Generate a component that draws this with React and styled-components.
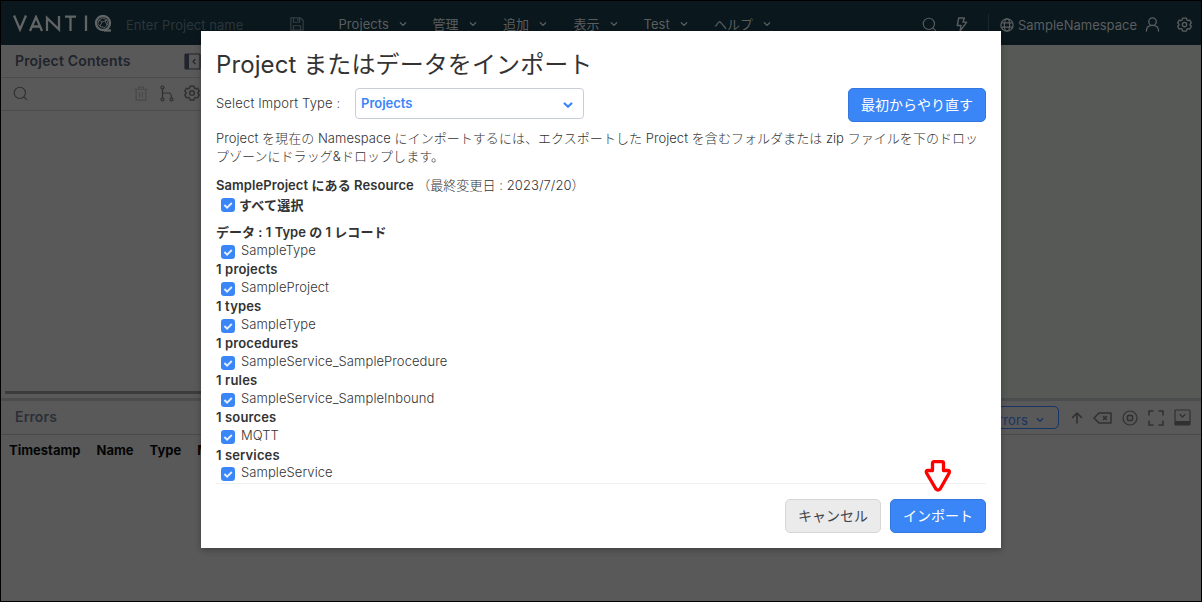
import React from "react";
import styled, { createGlobalStyle, css } from "styled-components";

const Global = createGlobalStyle`
  * { box-sizing: border-box; }
  body { margin: 0; background: #000; }
  body, button { font-family: Inter, "Noto Sans CJK JP", sans-serif; }
`;

const Screen = styled.div`
  position: relative;
  width: 1202px;
  height: 602px;
  border: 1px solid #000;
  background: #595959;
  overflow: hidden;
  display: flex;
  flex-direction: column;
`;

const Header = styled.header`
  height: 44px;
  flex: none;
  background: #0a171c;
  color: #5a5e60;
  display: flex;
  align-items: center;
  padding: 0 9px 0 12px;
  font-size: 13px;
`;

const ProjectName = styled.span`
  margin: 3px 0 0 14px;
  width: 164px;
  color: #2a363b;
  font-size: 13px;
  letter-spacing: 0.05px;
`;

const SaveIcon = styled.span`
  display: flex;
  margin-top: 2px;
  color: #353f43;
`;

const Menus = styled.nav`
  display: flex;
  margin: 1px 0 0 34.500px;
`;

const MenuItem = styled.span`
  width: ${(p) => p.$w}px;
  display: flex;
  align-items: center;
  gap: 10px;
  height: 20px;
  white-space: nowrap;
  letter-spacing: ${(p) => p.$ls || 0}px;
`;

const HeaderTools = styled.div`
  margin-left: auto;
  display: flex;
  align-items: center;
  svg { flex: none; margin-top: 3px; }
  .bolt { margin-left: 17px; }
  .user { margin-right: 17px; }
`;

const Divider = styled.i`
  width: 1px;
  height: 18px;
  margin: 0 11px 0 19px;
  background: #1b272c;
`;

const Namespace = styled.span`
  margin: 4px 8px 0 4px;
  font-size: 13px;
`;

const Workspace = styled.div`
  flex: none;
  height: 353px;
  display: flex;
`;

const SidePanel = styled.aside`
  width: 206px;
  display: flex;
  flex-direction: column;
  background: #595959;
`;

const PanelTitle = styled.div`
  height: 33px;
  border-bottom: 1px solid #4b4c4d;
  padding: 0 6px 0 14px;
  display: flex;
  align-items: center;
  justify-content: space-between;
  font-size: 14px;
  font-weight: 600;
  letter-spacing: 0.17px;
  color: #20242c;
  span { padding-bottom: 2px; }
`;

const PanelTools = styled.div`
  height: 33px;
  border-bottom: 1px solid #4b4c4d;
  padding: 0 7px 2px 12px;
  display: flex;
  align-items: center;
  color: #2f3032;
  .trash { margin-left: auto; color: #484848; }
  .tree { margin: 0 10px 0 12px; }
`;

const Scrollbar = styled.div`
  height: 3px;
  margin: auto 0 4px 4px;
  background: #3c3c3d;
`;

const Canvas = styled.main`
  flex: 1;
  background: #575957;
`;

const Splitter = styled.div`
  height: 3px;
  flex: none;
  background: #4a4c4e;
`;

const ErrorsBar = styled.div`
  height: 34px;
  flex: none;
  border-bottom: 1px solid #4a4a4a;
  padding: 0 10px 0 14px;
  display: flex;
  align-items: center;
  font-size: 14px;
  font-weight: 600;
  letter-spacing: 0.15px;
  color: #2b2f37;
  > span { padding-bottom: 2px; }
`;

const BarTools = styled.div`
  margin-left: auto;
  display: flex;
  align-items: center;
  gap: 10px;
  color: #303030;
`;

const Filter = styled.span`
  width: 90px;
  height: 23px;
  margin-right: 2px;
  border: 1px solid #173464;
  border-radius: 5px;
  padding: 4px 14px 0 0;
  display: flex;
  align-items: center;
  justify-content: flex-end;
  gap: 8px;
  color: #173464;
  font-size: 13px;
  font-weight: 400;
  white-space: nowrap;
`;

const TableHead = styled.div`
  height: 30px;
  flex: none;
  padding: 0 8px;
  display: flex;
  align-items: center;
  gap: 16px;
  font-size: 13px;
  font-weight: 700;
  color: #050505;
  white-space: nowrap;
`;

const Dialog = styled.section`
  position: absolute;
  left: 200px;
  top: 30px;
  width: 800px;
  height: 517px;
  padding: 18px 15px 15px;
  background: #fff;
  color: #333;
  box-shadow: 0 2px 6px rgba(0, 0, 0, 0.3);
  display: flex;
  flex-direction: column;
  font-size: 13px;
`;

const Title = styled.h1`
  margin: 0;
  height: 32px;
  line-height: 32px;
  font-size: 24px;
  font-weight: 400;
  letter-spacing: 0.1px;
  white-space: nowrap;
`;

const ImportRow = styled.div`
  display: flex;
  align-items: center;
  height: 34px;
  margin-top: 7px;
`;

const FieldLabel = styled.span`
  width: 139px;
  padding-bottom: 4px;
  letter-spacing: 0.16px;
  font-weight: 300;
`;

const Select = styled.div`
  width: 229px;
  height: 31px;
  margin-bottom: 3px;
  border: 1px solid #c9cdd8;
  border-radius: 4px;
  padding: 0 10px 0 5px;
  display: flex;
  align-items: center;
  justify-content: space-between;
  color: #3a86f7;
  font-weight: 600;
  span { padding-bottom: 2px; }
  svg { margin-top: 2px; }
`;

const Button = styled.button`
  width: ${(p) => p.$w}px;
  height: 34px;
  padding: 0 0 2px;
  border-radius: 5px;
  font-size: 14px;
  white-space: nowrap;
  ${(p) =>
    p.$primary
      ? css`
          background: #3a86f7;
          border: 1px solid #3478df;
          color: #fff;
        `
      : css`
          background: #ebebeb;
          border: 1px solid #d6d6d6;
          color: #40444c;
        `}
`;

const Restart = styled(Button)`
  margin-left: auto;
`;

const Description = styled.p`
  margin: 7px 0 0;
  height: 36px;
  line-height: 18px;
  font-weight: 300;
  letter-spacing: 0.045px;
  white-space: nowrap;
`;

const Heading = styled.div`
  height: ${(p) => p.$h || 18.55}px;
  line-height: 18px;
  margin-top: ${(p) => p.$mt || 0}px;
  font-weight: 600;
  letter-spacing: ${(p) => p.$ls || 0}px;
  white-space: nowrap;
`;

const Modified = styled.span`
  font-weight: 300;
`;

const CheckRow = styled.label`
  height: ${(p) => p.$h || 18.55}px;
  line-height: ${(p) => (p.$bold ? 18 : 17.4)}px;
  display: flex;
  align-items: flex-start;
  gap: ${(p) => (p.$bold ? 4 : 6)}px;
  padding-left: 5px;
  margin-bottom: ${(p) => (p.$bold ? 8 : 0)}px;
  font-weight: ${(p) => (p.$bold ? 600 : 300)};
  letter-spacing: ${(p) => (p.$bold ? 0.25 : 0.07)}px;
  svg { flex: none; margin-top: ${(p) => (p.$bold ? 2 : 3.3)}px; }
`;

const Footer = styled.footer`
  margin-top: auto;
  height: 50px;
  border-top: 1px solid #f0f0f0;
  display: flex;
  align-items: flex-end;
  justify-content: flex-end;
  gap: 9px;
`;

const Pointer = styled.svg`
  position: absolute;
  left: 722px;
  top: 428px;
`;

const Icon = ({ size = 16, w, h, box = "0 0 16 16", sw = 1.2, children, className }) => (
  <svg className={className} width={w || size} height={h || size} viewBox={box} fill="none" stroke="currentColor"
    strokeWidth={sw} strokeLinecap="round" strokeLinejoin="round">{children}</svg>
);

const Chevron = ({ size = 8, sw = 1.3 }) => (
  <Icon size={size} box="0 0 8 8" sw={sw}><path d="M1.3 2.8 4 5.4 6.7 2.8" /></Icon>
);

const Gear = ({ size = 16 }) => (
  <Icon size={size} sw={1.4}>
    <path d="M6 1.2h4l.6 2 1 .6 2-.5 1.7 3-1.4 1.4v.8l1.4 1.4-1.7 3-2-.5-1 .6-.6 2H6l-.6-2-1-.6-2 .5-1.7-3 1.4-1.4v-.8L.7 6.3l1.7-3 2 .5 1-.6z" />
    <circle cx="8" cy="8.1" r="2.3" />
  </Icon>
);

const Search = ({ size = 15 }) => (
  <Icon size={size}><circle cx="7.3" cy="7.3" r="6" /><path d="m11.8 11.8 2.8 2.8" /></Icon>
);

const Check = () => (
  <svg width="14" height="14" viewBox="0 0 14 14">
    <rect width="14" height="14" rx="3.2" fill="#3a86f7" />
    <path d="m3.4 7 2.7 2.7 4.7-4.7" fill="none" stroke="#e4efff" strokeWidth="1.9" />
  </svg>
);

const Logo = () => (
  <svg width="99" height="17" viewBox="0 0 99 17" fill="none" stroke="#626566" strokeWidth="2.3">
    <path d="m1 .5 6 14 6-14M17 16l6-14 6 14M19.5 11.500h7M34 16V3l12 11.500V1M52 1.600h11M57.500 1.600V16M73 .5V16" />
    <circle cx="90" cy="8" r="7" />
    <path d="M91 15.500h7" />
    <path d="m86 5 4-2 4 2 1 4-3 3.500-5-1-2-3zM86 5l3 2 5-2M89 7l-2 4M92 6l2 4" strokeWidth=".9" />
  </svg>
);

const MENUS = [
  ["Projects", 94, 0.07],
  ["管理", 70.5],
  ["追加", 70.5],
  ["表示", 70],
  ["Test", 70.5, 0.07],
  ["ヘルプ", 62],
];

const RESOURCES = [
  ["データ : 1 Type の 1 レコード", "SampleType", 0.02],
  ["1 projects", "SampleProject", 0.17],
  ["1 types", "SampleType", 0.17],
  ["1 procedures", "SampleService_SampleProcedure", 0.13],
  ["1 rules", "SampleService_SampleInbound", 0.17],
  ["1 sources", "MQTT", 0.15],
  ["1 services", "SampleService", 0.13],
];

export default function App() {
  return (
    <>
      <Global />
      <Screen>
        <Header>
          <Logo />
          <ProjectName>Enter Project name</ProjectName>
          <SaveIcon>
            <Icon size={14} sw={1.4}>
              <path d="M1 1h11l3 3v11H1zM4 1v5h7V1M4 15v-5h8v5M9 2.5v1.5" />
            </Icon>
          </SaveIcon>
          <Menus>
            {MENUS.map(([name, w, ls]) => (
              <MenuItem key={name} $w={w} $ls={ls}>{name}<Chevron /></MenuItem>
            ))}
          </Menus>
          <HeaderTools>
            <Search />
            <Icon size={15} sw={1.5} className="bolt"><path d="M5 1h6L9.5 5.5h4L6.5 15l1-6H3.500z" /></Icon>
            <Divider />
            <Icon size={14} sw={1.4}>
              <circle cx="8" cy="8" r="7" /><ellipse cx="8" cy="8" rx="3" ry="7" /><path d="M1.5 5.5h13M1.5 10.5h13" />
            </Icon>
            <Namespace>SampleNamespace</Namespace>
            <Icon size={15} sw={1.4} className="user"><circle cx="8" cy="5" r="4" /><path d="M1.5 15c0-4 2.500-6 6.500-6s6.500 2 6.500 6" /></Icon>
            <Gear size={15} />
          </HeaderTools>
        </Header>

        <Workspace>
          <SidePanel>
            <PanelTitle>
              <span>Project Contents</span>
              <Icon size={17} box="0 0 17 17">
                <rect x="1" y="1" width="15" height="15" rx="1" /><path d="M3 1v15" strokeWidth="4" strokeLinecap="butt" /><path d="m11 6.500-2 2 2 2" />
              </Icon>
            </PanelTitle>
            <PanelTools>
              <Search />
              <Icon w={14} h={15} box="1 0 14 16" className="trash">
                <path d="M1.5 3.500h13M5.500 3.500V1h5v2.500M2.800 3.500V15h10.400V3.500M6.500 7v4.500M9.500 7v4.500" />
              </Icon>
              <Icon w={14} h={17} box="0 0 14 17" className="tree">
                <circle cx="2.500" cy="2.500" r="1.500" /><circle cx="2.500" cy="14.500" r="1.500" /><circle cx="11.500" cy="14.500" r="1.500" />
                <path d="M2.500 4v9M2.500 8h6q3 0 3 5" />
              </Icon>
              <Gear />
            </PanelTools>
            <Scrollbar />
          </SidePanel>
          <Canvas />
        </Workspace>
        <Splitter />
        <ErrorsBar>
          <span>Errors</span>
          <BarTools>
            <Filter>All Errors<Chevron /></Filter>
            <Icon w={12} h={14} box="2 1 12 14"><path d="M8 13V3M3.500 7.500 8 3l4.500 4.500" strokeWidth="1.600" /></Icon>
            <Icon w={19} h={14} box="0 0 19 14" sw={1.5}><path d="M6 2h12v10H6L1 7zM10.500 5.500l3 3M13.500 5.500l-3 3" /></Icon>
            <Icon size={16}><circle cx="8" cy="8" r="7" /><rect x="5.500" y="5.500" width="5" height="5" rx="1" strokeWidth="1.500" /></Icon>
            <Icon size={16} sw={1.5}><path d="M1 5V1h4M11 1h4v4M15 11v4h-4M5 15H1v-4" /></Icon>
            <Icon size={17} box="0 0 17 17">
              <rect x="1" y="1" width="15" height="15" rx="1" /><path d="M1 14h15" strokeWidth="4" strokeLinecap="butt" /><path d="m6 5.500 2.500 2.500L11 5.500" />
            </Icon>
          </BarTools>
        </ErrorsBar>
        <TableHead><span>Timestamp</span><span>Name</span><span>Type</span><span>M</span></TableHead>

        <Dialog>
          <Title>Project またはデータをインポート</Title>
          <ImportRow>
            <FieldLabel>Select Import Type :</FieldLabel>
            <Select><span>Projects</span><Chevron size={10} sw={1.8} /></Select>
            <Restart $primary $w={138}>最初からやり直す</Restart>
          </ImportRow>
          <Description>
            Project を現在の Namespace にインポートするには、エクスポートした Project を含むフォルダまたは zip ファイルを下のドロッ<br />
            プゾーンにドラッグ&amp;ドロップします。
          </Description>
          <Heading $mt={11} $h={20} $ls={0.07}>
            SampleProject にある Resource <Modified>（最終変更日 : 2023/7/20）</Modified>
          </Heading>
          <CheckRow $bold $h={19}><Check />すべて選択</CheckRow>
          {RESOURCES.map(([heading, item, ls]) => (
            <React.Fragment key={heading}>
              <Heading $ls={ls}>{heading}</Heading>
              <CheckRow><Check />{item}</CheckRow>
            </React.Fragment>
          ))}
          <Footer>
            <Button $w={96}>キャンセル</Button>
            <Button $primary $w={96}>インポート</Button>
          </Footer>
          <Pointer width="30" height="34" viewBox="0 0 30 34">
            <path d="M11 2.700h8q1.500 0 1.500 1.500v7.300h4.200q2.500 0 1.500 2.500L17 30.200q-2 2-4 0L3.500 14q-1-2.500 1.500-2.500h4.500V4.200q0-1.500 1.500-1.500z" fill="#fff" stroke="#f00" strokeWidth="3.300" strokeLinejoin="round" />
          </Pointer>
        </Dialog>
      </Screen>
    </>
  );
}
